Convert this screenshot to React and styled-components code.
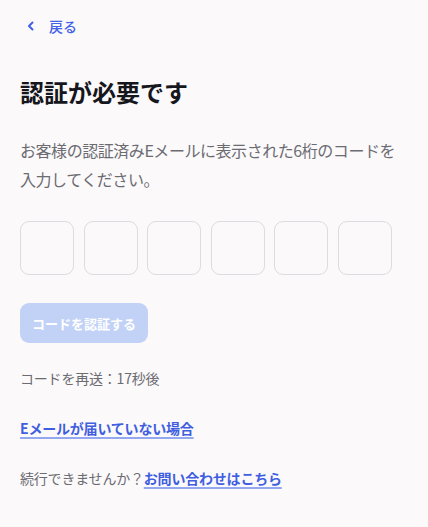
import React from "react";
import styled, { createGlobalStyle } from "styled-components";

const Global = createGlobalStyle`
  html, body { margin: 0; padding: 0; background: #fbf9fa; }
  body { font-family: "Noto Sans CJK JP", "Noto Sans", sans-serif; }
  * { box-sizing: border-box; }
`;

const Page = styled.div`
  padding: 14px 20px 20px 20px;
  display: flex;
  flex-direction: column;
`;

const Back = styled.a`
  display: flex;
  align-items: center;
  gap: 13px;
  color: #4161e6;
  font-size: 14px;
  font-weight: 500;
  text-decoration: none;
  padding-left: 6px;
  height: 24px;
`;

const Title = styled.h1`
  margin: 36px 0 0 0;
  font-size: 24px;
  font-weight: 700;
  color: #16161d;
  line-height: 36px;
`;

const Desc = styled.p`
  margin: 26px 0 0 0;
  font-size: 16px;
  line-height: 29px;
  letter-spacing: -0.45px;
  color: #6b6b72;
`;

const CodeRow = styled.div`
  margin-top: 27px;
  display: flex;
  gap: 9.6px;
`;

const CodeBox = styled.input`
  width: 54px;
  height: 54px;
  border: 1px solid #dedbe2;
  border-radius: 9px;
  background: transparent;
  font-size: 22px;
  text-align: center;
  outline: none;
`;

const VerifyButton = styled.button`
  align-self: flex-start;
  margin-top: 28px;
  height: 40px;
  padding: 0 12px;
  border: none;
  border-radius: 9px;
  background: #c2d2f7;
  color: #ffffff;
  font-family: inherit;
  font-size: 13px;
  font-weight: 700;
`;

const Note = styled.div`
  margin-top: ${(p) => p.$mt}px;
  font-size: 14px;
  line-height: 22px;
  letter-spacing: -0.2px;
  color: #6b6b72;
`;

const Link = styled.a`
  color: #3f5ee0;
  font-weight: 700;
  font-size: 14px;
  text-decoration: underline;
  text-decoration-color: #93a8f1;
  text-decoration-thickness: 2px;
  text-underline-offset: 3px;
`;

const Chevron = () => (
  <svg width="10" height="10" viewBox="0 0 10 10" fill="none">
    <path d="M6.5 1.5 L3 5 L6.5 8.5" stroke="#4161e6" strokeWidth="2" strokeLinecap="round" strokeLinejoin="round" />
  </svg>
);

export default function App() {
  return (
    <>
      <Global />
      <Page>
        <Back href="#">
          <Chevron />
          <span>戻る</span>
        </Back>
        <Title>認証が必要です</Title>
        <Desc>お客様の認証済みEメールに表示された6桁のコードを入力してください。</Desc>
        <CodeRow>
          {[0, 1, 2, 3, 4, 5].map((i) => (
            <CodeBox key={i} maxLength={1} />
          ))}
        </CodeRow>
        <VerifyButton disabled>コードを認証する</VerifyButton>
        <Note $mt={24}>コードを再送：17秒後</Note>
        <Note $mt={28}>
          <Link href="#">Eメールが届いていない場合</Link>
        </Note>
        <Note $mt={28}>
          続行できませんか？<Link href="#">お問い合わせはこちら</Link>
        </Note>
      </Page>
    </>
  );
}
